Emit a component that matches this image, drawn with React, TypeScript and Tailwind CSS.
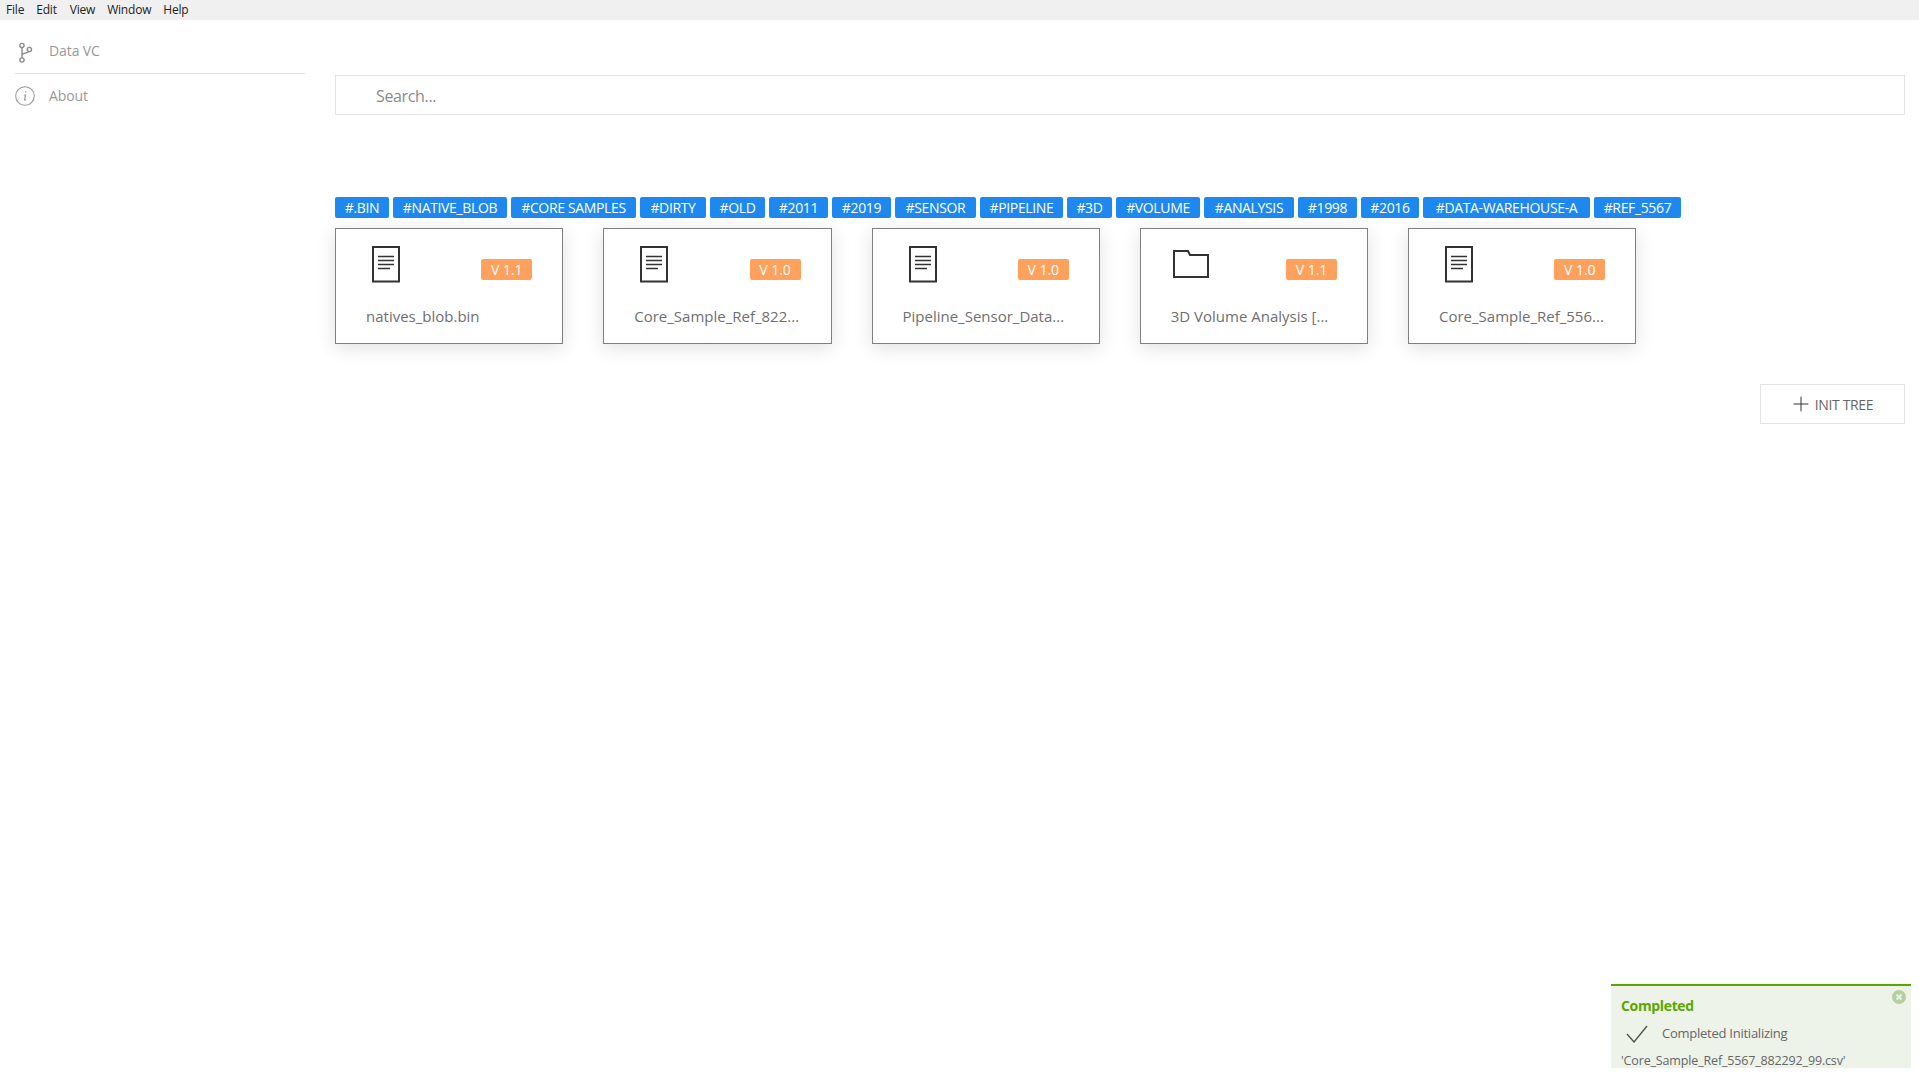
import { Plus } from "lucide-react";

const font = "font-['Open_Sans','Noto_Sans',sans-serif]";

const menus = [
  { label: "File", cls: "ml-[6px]" },
  { label: "Edit", cls: "ml-[12px]" },
  { label: "View", cls: "ml-[13px]" },
  { label: "Window", cls: "ml-[12px]" },
  { label: "Help", cls: "ml-[12px]" },
];

const tags = [
  { label: "#.BIN", cls: "w-[54px]" },
  { label: "#NATIVE_BLOB", cls: "w-[114px]" },
  { label: "#CORE SAMPLES", cls: "w-[125px]" },
  { label: "#DIRTY", cls: "w-[66px]" },
  { label: "#OLD", cls: "w-[55px]" },
  { label: "#2011", cls: "w-[59px]" },
  { label: "#2019", cls: "w-[59px]" },
  { label: "#SENSOR", cls: "w-[81px]" },
  { label: "#PIPELINE", cls: "w-[83px]" },
  { label: "#3D", cls: "w-[45px]" },
  { label: "#VOLUME", cls: "w-[84px]" },
  { label: "#ANALYSIS", cls: "w-[90px]" },
  { label: "#1998", cls: "w-[59px]" },
  { label: "#2016", cls: "w-[58px]" },
  { label: "#DATA-WAREHOUSE-A", cls: "w-[167px]" },
  { label: "#REF_5567", cls: "w-[87px]" },
];

const cards = [
  { name: "natives_blob.bin", version: "V 1.1", folder: false },
  { name: "Core_Sample_Ref_822...", version: "V 1.0", folder: false },
  { name: "Pipeline_Sensor_Data...", version: "V 1.0", folder: false },
  { name: "3D Volume Analysis [...", version: "V 1.1", folder: true },
  { name: "Core_Sample_Ref_556...", version: "V 1.0", folder: false },
];

function DocIcon() {
  return (
    <svg width="36" height="37" viewBox="0 0 36 37" fill="none" stroke="#333" className="block">
      <rect x="5" y="1" width="26" height="34.5" strokeWidth="2" />
      <path d="M10 10.500h16M10 14.500h16M10 18.500h16M10 22.500h12" strokeWidth="1.6" />
    </svg>
  );
}

function FolderIcon() {
  return (
    <svg width="36" height="37" viewBox="0 0 36 37" fill="none" stroke="#333" strokeWidth="2" className="block">
      <path d="M1 5h14l2 4h18v22H1z" />
    </svg>
  );
}

function BranchIcon() {
  return (
    <svg width="20" height="24" viewBox="0 0 20 24" fill="none" stroke="#8c8c8c" strokeWidth="1.4">
      <circle cx="7" cy="6.500" r="2.100" />
      <circle cx="7" cy="21" r="2.100" />
      <circle cx="14.400" cy="10.500" r="2.100" />
      <path d="M7 8.600v10.300M7 16.500c0-3 6-2.200 7-4" />
    </svg>
  );
}

function InfoIcon() {
  return (
    <svg width="20" height="20" viewBox="0 0 20 20" fill="none" stroke="#9a9a9a" strokeWidth="1.1">
      <circle cx="10" cy="10" r="9.300" />
      <path d="M10.800 5.200v1.300M8.800 9h1.800l-1 4.500c-.1.700.6.800 1.500.1" strokeWidth="1.200" />
    </svg>
  );
}

function Card({ name, version, folder }: { name: string; version: string; folder: boolean }) {
  return (
    <div className="h-[116px] w-[228.25px] shrink-0 border border-[#808080] bg-white pt-[17px] shadow-[0_4px_18px_rgba(0,0,0,0.12)]">
      <div className="flex items-start pl-[32px] pr-[30px]">
        {folder ? <FolderIcon /> : <DocIcon />}
        <span className="ml-auto mt-[13px] flex h-[21px] w-[51px] items-center justify-center rounded-[2px] bg-[#fda15d] text-[14px] text-white">
          {version}
        </span>
      </div>
      <div className="mt-[22px] whitespace-nowrap pl-[30px] text-[15px] leading-[22px] text-[#6f6f6f]">
        {name}
      </div>
    </div>
  );
}

export default function App() {
  return (
    <div className={`relative h-[1079px] w-full overflow-hidden bg-white ${font}`}>
      <div className="flex h-[20px] items-center bg-[#f0f0f0] text-[12px] tracking-[-0.2px] text-[#222]">
        {menus.map((m) => (
          <span key={m.label} className={m.cls}>
            {m.label}
          </span>
        ))}
      </div>

      <div className="flex">
        <aside className="w-[335px] shrink-0 pl-[15px] pr-[30px] text-[14px] tracking-[-0.1px] text-[#999]">
          <div className="flex h-[54px] items-center border-b border-[#e5e5e5] pt-[8px]">
            <span className="flex w-[34px] shrink-0 justify-start">
              <BranchIcon />
            </span>
            Data VC
          </div>
          <div className="flex h-[43px] items-center">
            <span className="flex w-[34px] shrink-0 justify-start">
              <InfoIcon />
            </span>
            About
          </div>
        </aside>

        <main className="min-w-0 flex-1 pr-[14px] pt-[55px]">
          <div className="flex h-[40px] items-center border border-[#e3e3e3] pl-[40px] pt-[1px] text-[16px] tracking-[-0.35px] text-[#8a8a8a]">
            Search...
          </div>

          <div className="mt-[82px] flex gap-[4px]">
            {tags.map((t) => (
              <span
                key={t.label}
                className={`flex h-[21px] items-center justify-center whitespace-nowrap rounded-[2px] bg-[#1e88ef] text-[14px] tracking-[-0.35px] text-white ${t.cls}`}
              >
                {t.label}
              </span>
            ))}
          </div>

          <div className="mt-[10px] flex gap-[40px]">
            {cards.map((c) => (
              <Card key={c.name} {...c} />
            ))}
          </div>

          <div className="mt-[40px] flex justify-end">
            <button className="flex h-[40px] w-[145px] items-center justify-center gap-[2px] border border-[#e3e3e3] pr-[3px] text-[14px] tracking-[-0.35px] text-[#666]">
              <Plus size={24} strokeWidth={1} color="#333" />
              INIT TREE
            </button>
          </div>
        </main>
      </div>

      <div className="absolute bottom-[11px] right-[8px] h-[84px] w-[300px] rounded-b-[2px] border-t-2 border-[#5aa700] bg-[#eef3e9] pl-[10px] pt-[10px]">
        <svg width="14" height="14" viewBox="0 0 14 14" className="absolute right-[5px] top-[4px]">
          <circle cx="7" cy="7" r="7" fill="#b2d0a0" />
          <path d="M4.500 4.500l5 5M9.500 4.500l-5 5" stroke="#eef3e9" strokeWidth="2" />
        </svg>
        <div className="text-[14px] font-bold leading-[20px] tracking-[-0.35px] text-[#5aa700]">Completed</div>
        <div className="mt-[8px] flex h-[20px] items-center text-[13px] tracking-[-0.25px] text-[#666]">
          <svg width="22" height="18" viewBox="0 0 22 18" fill="none" stroke="#4a5a40" strokeWidth="1.4" className="ml-[5px] mr-[14px]">
            <path d="M1 9l7 8L21 1" />
          </svg>
          Completed Initializing
        </div>
        <div className="mt-[8px] whitespace-nowrap text-[12.500px] tracking-[-0.15px] text-[#666]">
          'Core_Sample_Ref_5567_882292_99.csv'
        </div>
      </div>
    </div>
  );
}
